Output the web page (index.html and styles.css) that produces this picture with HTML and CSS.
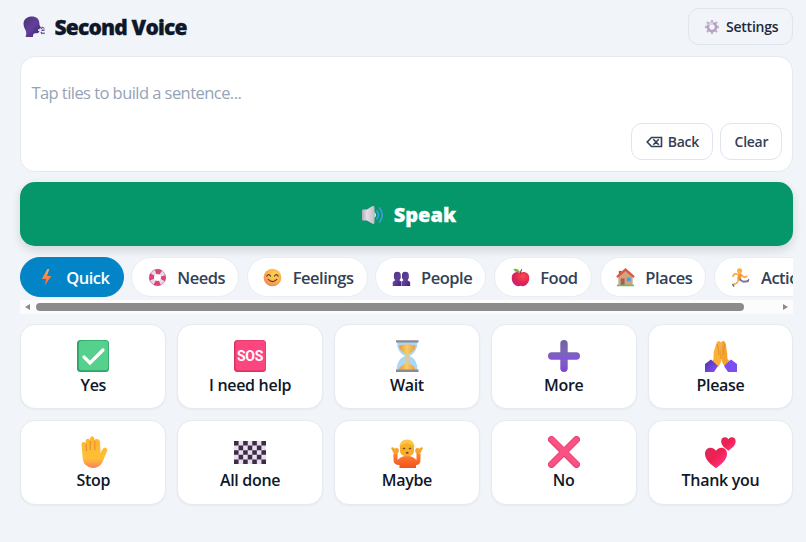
FILE: index.html
```html
<!DOCTYPE html>
<html lang="en">
<head>
  <meta charset="UTF-8">
  <meta name="viewport" content="width=device-width, initial-scale=1.0">
  <title>Second Voice</title>
  <link rel="stylesheet" href="styles.css">
</head>
<body>
  <svg width="0" height="0" class="defs">
    <defs>
      <linearGradient id="purple" x1="0" y1="0" x2="1" y2="1"><stop offset="0" stop-color="#493177"/><stop offset=".5" stop-color="#61409a"/><stop offset="1" stop-color="#3e2270"/></linearGradient>
      <linearGradient id="bolt" x1="0" y1="0" x2="0" y2="1"><stop offset="0" stop-color="#f9b052"/><stop offset="1" stop-color="#f15b45"/></linearGradient>
      <linearGradient id="cone" x1="0" y1="0" x2="1" y2="0"><stop offset="0" stop-color="#b5a9b9"/><stop offset=".4" stop-color="#e5dfe7"/><stop offset="1" stop-color="#c3bac7"/></linearGradient>
      <radialGradient id="face" cx=".6" cy=".35" r=".7"><stop offset="0" stop-color="#ffd44f"/><stop offset=".6" stop-color="#fbb04b"/><stop offset="1" stop-color="#ee7e57"/></radialGradient>
      <radialGradient id="apple" cx=".65" cy=".3" r=".8"><stop offset="0" stop-color="#fa4a53"/><stop offset=".6" stop-color="#de2450"/><stop offset="1" stop-color="#bc2487"/></radialGradient>
      <linearGradient id="plus" x1="0" y1="0" x2="0" y2="1"><stop offset="0" stop-color="#7060a2"/><stop offset=".5" stop-color="#8267c1"/><stop offset="1" stop-color="#7c48cb"/></linearGradient>
      <linearGradient id="plusBar" x1="0" y1="0" x2="0" y2="1"><stop offset="0" stop-color="#7668ae"/><stop offset="1" stop-color="#894fe0"/></linearGradient>
      <linearGradient id="hand" x1="0" y1="0" x2="0" y2="1"><stop offset="0" stop-color="#fdb52e"/><stop offset=".7" stop-color="#ffbf35"/><stop offset="1" stop-color="#f6825c"/></linearGradient>
      <linearGradient id="shirt" x1="0" y1="0" x2="0" y2="1"><stop offset="0" stop-color="#ff822d"/><stop offset="1" stop-color="#ef501f"/></linearGradient>
      <linearGradient id="heart" x1="0" y1="0" x2="1" y2="1"><stop offset="0" stop-color="#d9285d"/><stop offset=".45" stop-color="#f1204f"/><stop offset="1" stop-color="#fd3f9f"/></linearGradient>
      <linearGradient id="sand" x1="0" y1="0" x2="1" y2="0"><stop offset="0" stop-color="#e29a35"/><stop offset=".5" stop-color="#fbcb62"/><stop offset="1" stop-color="#dda04d"/></linearGradient>
      <linearGradient id="cuffL" x1="0" y1="0" x2="1" y2="1"><stop offset="0" stop-color="#4c31a8"/><stop offset="1" stop-color="#8b52ff"/></linearGradient>
      <path id="heartShape" d="M12 22C7 18 1 14 1 7.500C1 1 8.500-.5 12 4.500C15.500-.5 23 1 23 7.500C23 14 17 18 12 22z"/>
    </defs>
  </svg>

  <div class="app">
    <header class="header">
      <h1>
        <svg class="logo" viewBox="0 0 22 22"><path d="M8 .5C13 .2 16 2.500 16.300 6.500L16.500 9L18 11.800Q18 12.700 16.500 12.500L16.300 15.500Q16 17.500 12 17.300Q9.500 17.500 10 21H2.500Q4 17.500 2.500 14C-.8 9-.5 1.500 8 .5z" fill="url(#purple)"/><path d="M15 13.200h2.500v1.800H15z" fill="#e1ddf0"/><path d="M18 12.500l2-1.500M18.500 14.300h3M18 16l1.500 2M20.300 16.800l1.300.8M20.500 12.300l.8-.5" stroke="#65499a" stroke-width="1.500" fill="none"/></svg>
        <span>Second Voice</span>
      </h1>
      <button class="btn settings">
        <svg class="gear" viewBox="0 0 14 14"><g stroke="#bfb0cc" stroke-width="2.300"><path d="M7 0v14M0 7h14M2 2l10 10M12 2L2 12"/></g><circle cx="7" cy="7" r="4" fill="#f1f5f9" stroke="#b5a3c4" stroke-width="2.600"/><path d="M3.600 5A4 4 0 0 1 8 3.100" fill="none" stroke="#dcd3e4" stroke-width="2"/></svg>
        <span>Settings</span>
      </button>
    </header>

    <section class="sentence">
      <p class="placeholder">Tap tiles to build a sentence...</p>
      <div class="actions">
        <button class="btn back">
          <svg class="erase" viewBox="0 0 17 12"><path d="M5.500 1.500H15.500v9H5.500L1.200 6zM7.300 3.300l5.500 5.400M12.800 3.300l-5.500 5.400" fill="none" stroke="#334155" stroke-width="1.600"/></svg>
          <span>Back</span>
        </button>
        <button class="btn clear"><span>Clear</span></button>
      </div>
    </section>

    <button class="speak">
      <svg class="speaker" viewBox="0 0 23 20"><path d="M1 5.500Q1 4.500 2 4.500H6L11.500 1Q13.500.5 13.500 2.500V17.500Q13.500 19.500 11.500 18.800L6 15.500H2Q1 15.500 1 14.500z" fill="url(#cone)"/><path d="M13.500 7q3 3 0 6z" fill="#f1edf4"/><path d="M16 6q3 4 0 8M18.500 3q5.500 7 0 14" fill="none" stroke="#3b9dd5" stroke-width="1.700" stroke-linecap="round"/></svg>
      <span>Speak</span>
    </button>

    <nav class="categories">
      <div class="chips">
        <button class="chip quick active">
          <svg viewBox="0 0 20 20"><path d="M11 1L5 11.500h4.500L8 19l7-10.500h-4.500L13 1z" fill="url(#bolt)"/></svg><span>Quick</span>
        </button>
        <button class="chip needs">
          <svg viewBox="0 0 20 20"><circle cx="10" cy="10" r="6.200" fill="none" stroke="#e6d9ec" stroke-width="5"/><circle cx="10" cy="10" r="6.200" fill="none" stroke="#db4473" stroke-width="5" stroke-dasharray="5.700 4.040" stroke-dashoffset="2.850"/><circle cx="10" cy="10" r="8.600" fill="none" stroke="#c34c86" stroke-width=".6"/></svg><span>Needs</span>
        </button>
        <button class="chip feelings">
          <svg viewBox="0 0 20 20"><circle cx="10" cy="10" r="9.300" fill="url(#face)"/><path d="M4 8.500q2-3 4 0M12 8.500q2-3 4 0M5.500 12q4.500 4.500 9 0" fill="none" stroke="#613b32" stroke-width="1.200" stroke-linecap="round"/></svg><span>Feelings</span>
        </button>
        <button class="chip people">
          <svg viewBox="0 0 20 20"><g fill="url(#purple)"><path d="M2 7.500a3.600 3.600 0 0 1 7.200 0v3l-1.500 2.500 2 1.200V19H.8v-4.200L3.300 13 2 10.500z"/><path d="M10.500 7.500a3.600 3.600 0 0 1 7.200 0v3L16.400 13l2.700 1.800V19h-9v-4.800l2-1.200-1.600-2.500z"/></g></svg><span>People</span>
        </button>
        <button class="chip food">
          <svg viewBox="0 0 20 20"><path d="M10 5C14 3 19.200 5 19.200 10.500C19.200 16 15 20.500 10 18.800C5 20.500.8 16 .8 10.500C.8 5 6 3 10 5z" fill="url(#apple)"/><path d="M2.500 1Q8 0 9.500 4.500Q4 5 2.500 1z" fill="#6fba4a"/><path d="M10 6q0-3 1.500-4.500" stroke="#7b3c3c" stroke-width="1.200" fill="none"/></svg><span>Food</span>
        </button>
        <button class="chip places">
          <svg viewBox="0 0 20 20"><path d="M3 3h3v6H3z" fill="#a95848"/><path d="M2.500 8.500L10 2l7.500 6.500V18h-15z" fill="#d6a17c"/><path d="M1 9.500L10 1.700l9 7.800" fill="none" stroke="#d85b42" stroke-width="2.500"/><path d="M5 11h4v7H5z" fill="#9a6552"/><path d="M11.500 10h4v4h-4z" fill="#36a7e6"/><path d="M1 17.500h18v1.700H1z" fill="#65bd69"/></svg><span>Places</span>
        </button>
        <button class="chip actions-chip">
          <svg viewBox="0 0 20 20"><circle cx="9" cy="3" r="2.700" fill="#ffae43"/><g fill="none" stroke-linecap="round" stroke-linejoin="round"><path d="M8 7L4 6 2 8.500M11 7.500l3 2.300 2.500-1" stroke="#f8ad49" stroke-width="1.900"/><path d="M9.500 7.500L8.500 11" stroke="#f39836" stroke-width="4"/><path d="M9 12l4 2.500 4.500-.5" stroke="#8176a6" stroke-width="2"/><path d="M8 12.500L6 16l-4 1.500" stroke="#efb351" stroke-width="1.800"/><path d="M2 17.500l1 1.700M17.700 14l.8-1.700" stroke="#6d6394" stroke-width="1.500"/></g></svg><span>Actions</span>
        </button>
      </div>
      <div class="scrollbar">
        <i class="arrow left"></i>
        <div class="track"><div class="thumb"></div></div>
        <i class="arrow right"></i>
      </div>
    </nav>

    <main class="tiles">
      <button class="tile">
        <svg viewBox="0 0 32 32"><rect width="32" height="32" rx="3.500" fill="#2fa266"/><rect x="1.800" y=".8" width="29.500" height="29.500" rx="3" fill="#55d18d"/><path d="M7 17l6 6L26 10" fill="none" stroke="#fff" stroke-width="3.200" stroke-linecap="round"/></svg>
        <span>Yes</span>
      </button>
      <button class="tile">
        <svg viewBox="0 0 32 32"><rect width="32" height="32" rx="3.500" fill="#d7325f"/><rect x="1.500" y=".5" width="30" height="30" rx="3" fill="#fc467f"/><text x="16" y="20.800" class="sos" text-anchor="middle" textLength="26" lengthAdjust="spacingAndGlyphs">SOS</text></svg>
        <span>I need help</span>
      </button>
      <button class="tile">
        <svg viewBox="0 0 32 32"><path d="M6 2h20.500Q26.500 12 18.500 16Q26.500 19 26.500 30H5.500Q6 19 14 16Q6 12 6 2z" fill="#acd6f3"/><path d="M8 5.500Q16 3.500 24.500 5.500Q24.500 11 17.500 14v9.500Q23 25 24.500 29.500h-17Q10 25 15.300 23.500V14Q8 11 8 5.500z" fill="url(#sand)"/><path d="M5 .2h22.500v2.400H5zM5 29.600h22.500V32H5z" fill="#8d8991"/></svg>
        <span>Wait</span>
      </button>
      <button class="tile">
        <svg viewBox="0 0 32 32"><rect x="12.300" width="7.400" height="32" rx="3.700" fill="url(#plus)"/><rect y="12.300" width="32" height="7.400" rx="3.700" fill="url(#plusBar)"/></svg>
        <span>More</span>
      </button>
      <button class="tile">
        <svg viewBox="0 0 32 32"><path d="M15.500 2Q13-.5 11.500 3L8.700 12 8.500 19 6 23l7 4q3.500-4.500 3.300-8z" fill="#fcb034"/><path d="M16.500 2Q19-.5 20.500 3L22 12l.5 7 4 4-6 4Q16.500 23 16.300 18z" fill="#f6a22e"/><path d="M16 2v17M12 4q2 5 2 11M20 4q-2 5-2 11" fill="none" stroke="#d98630" stroke-width=".8"/><path d="M6 19.500L13 26l-4 6H0V24z" fill="url(#cuffL)"/><path d="M26 19.500l6 4.500v8h-9l-4-6z" fill="#7c4df0"/></svg>
        <span>Please</span>
      </button>
      <button class="tile">
        <svg viewBox="0 0 32 32"><path d="M4.500 8Q5.500 4.500 8.500 7V5Q10 1 13 4V2.500Q15-2 17.500 2.500V4Q21 1.500 23 5.500L23.500 17Q25.500 12 28 11.500Q31.500 12.500 30 15L25.500 26Q22.500 32 15.500 32Q7 31 5.800 23z" fill="url(#hand)"/><path d="M9 8l.5 7M13.300 5v9M17.800 5v9" stroke="#e08b32" stroke-width="1" fill="none"/></svg>
        <span>Stop</span>
      </button>
      <button class="tile">
        <svg viewBox="0 0 32 32"><rect y="5" width="32" height="23" fill="#eadff2"/><path d="M0 7.300h32M0 16.500h32M0 25.700h32" stroke="#3b2d43" stroke-width="4.600" stroke-dasharray="4.570"/><path d="M4.570 11.900H32M4.570 21.100H32" stroke="#3b2d43" stroke-width="4.600" stroke-dasharray="4.570"/></svg>
        <span>All done</span>
      </button>
      <button class="tile">
        <svg viewBox="0 0 32 32"><path d="M2.500 18h4v6Q11 19.500 16 20Q21 19.500 25.500 24v-6h4v6q0 5-4.500 5v3.500H8.500V29q-6 0-6-5z" fill="url(#shirt)"/><path d="M0 12Q2 10 4 13q1-2 3-.5Q9 14 6.500 18H3zM32 12q-2-2-4 1-1-2-3-.5-2 1.500.5 5.500H29z" fill="#f6a52c"/><path d="M9 11C9 1.500 23 1.500 23 11v4c0 7-14 7-14 0z" fill="#f9ae2b"/><path d="M8.500 11Q9 3.500 16 3.500T23.500 11q-3-3-7-3.500-5 0-8 3.500z" fill="#ffc640"/><path d="M12.500 12.500h1M18.500 12.500h1M15.500 17q.7-1.200 1.400 0" fill="none" stroke="#7c4628" stroke-width="1.500" stroke-linecap="round"/></svg>
        <span>Maybe</span>
      </button>
      <button class="tile">
        <svg viewBox="0 0 32 32"><path d="M3.500 3.500l25 25M28.500 3.500l-25 25" fill="none" stroke="#e53e70" stroke-width="7" stroke-linecap="round"/><path d="M3.800 3.200l24.800 25M28.500 3.500l-25 24.800" fill="none" stroke="#fa5282" stroke-width="5.300" stroke-linecap="round"/></svg>
        <span>No</span>
      </button>
      <button class="tile">
        <svg viewBox="0 0 32 32"><use href="#heartShape" transform="translate(-1 10.300) scale(1)" fill="url(#heart)"/><use href="#heartShape" transform="translate(15.500 .3) scale(.66)" fill="url(#heart)"/></svg>
        <span>Thank you</span>
      </button>
    </main>
  </div>
</body>
</html>
```
FILE: styles.css
```css
* {
  box-sizing: border-box;
}
body {
  margin: 0;
  height: 542px;
  overflow: hidden;
  background: #f1f5f9;
  color: #0f172a;
  font-family: "Open Sans", "Noto Sans", sans-serif;
}
button {
  font-family: inherit;
  color: inherit;
  padding: 0;
  cursor: pointer;
}
.defs {
  position: absolute;
}
.app {
  padding: 8px 12.6px 0 20.4px;
}
.header {
  display: flex;
  align-items: center;
  justify-content: space-between;
  height: 37px;
  margin-bottom: 10.5px;
}
h1 {
  display: flex;
  align-items: center;
  gap: 9px;
  margin: 0 0 0 3px;
  font-size: 21px;
  font-weight: 800;
  letter-spacing: -0.8px;
  -webkit-text-stroke: 0.3px #0f172a;
}
.logo {
  width: 22px;
  height: 22px;
}
.btn {
  display: flex;
  align-items: center;
  justify-content: center;
  height: 37px;
  border: 1px solid #dfe5ed;
  border-radius: 11px;
  background: #fff;
  color: #334155;
  font-size: 14px;
  font-weight: 600;
  letter-spacing: -0.25px;
}
.settings {
  width: 105.5px;
  gap: 7px;
  padding-left: 2px;
  background: #f1f5f9;
  color: #1e293b;
}
.gear {
  width: 14px;
  height: 14px;
}
.sentence {
  height: 116px;
  padding: 24px 10px 11px;
  background: #fff;
  border: 1px solid #e5eaf1;
  border-radius: 15px;
}
.placeholder {
  margin: 0;
  height: 42.5px;
  line-height: 24px;
  font-size: 16.5px;
  letter-spacing: -0.55px;
  color: #94a3b8;
}
.actions {
  display: flex;
  justify-content: flex-end;
  gap: 7px;
}
.back {
  width: 82px;
  gap: 5px;
}
.erase {
  width: 17px;
  height: 12px;
}
.clear {
  width: 62px;
}
.speak {
  display: flex;
  align-items: center;
  justify-content: center;
  gap: 10px;
  width: 100%;
  height: 64px;
  margin: 10.5px 0 11px;
  padding: 1px 0 0 3px;
  border: none;
  border-radius: 15px;
  background: #059669;
  box-shadow: 0 4px 10px rgba(15, 23, 42, 0.14);
  color: #fff;
  font-size: 20px;
  font-weight: 800;
  -webkit-text-stroke: 0.3px #fff;
}
.speaker {
  width: 23px;
  height: 20px;
}
.categories {
  overflow: hidden;
  height: 57px;
  margin-bottom: 10px;
}
.chips {
  display: flex;
  gap: 7.5px;
  height: 40px;
}
.chip {
  display: flex;
  flex: none;
  align-items: center;
  justify-content: center;
  gap: 10.5px;
  height: 40px;
  padding: 1px 0 0 2px;
  border: 1px solid #e9edf3;
  border-radius: 20px;
  background: #fff;
  color: #334155;
  font-size: 16.5px;
  font-weight: 600;
  letter-spacing: -0.5px;
}
.chip svg {
  width: 19px;
  height: 19px;
}
.chip span {
  line-height: 22px;
}
.chip.active {
  background: #0284c7;
  border-color: #0284c7;
  color: #fff;
}
.quick {
  width: 103.5px;
}
.needs {
  width: 108px;
}
.feelings {
  width: 121px;
}
.people {
  width: 111px;
}
.food {
  width: 98.5px;
}
.places {
  width: 106.5px;
}
.actions-chip {
  width: 118px;
}
.scrollbar {
  display: flex;
  align-items: center;
  height: 14px;
  margin-top: 3px;
  padding: 0 5px;
  background: #fcfcfc;
}
.track {
  flex: 1;
  padding: 0 39px 0 6px;
}
.thumb {
  height: 8px;
  border-radius: 4px;
  background: #8b8b8b;
}
.arrow {
  border: 3.5px solid transparent;
}
.arrow.left {
  border-left: none;
  border-right: 5px solid #8b8b8b;
}
.arrow.right {
  border-right: none;
  border-left: 5px solid #8b8b8b;
}
.tiles {
  display: grid;
  grid-template-columns: repeat(5, 1fr);
  gap: 11px;
}
.tile {
  display: flex;
  flex-direction: column;
  align-items: center;
  height: 85px;
  padding-top: 15px;
  border: 1px solid #e6ebf1;
  border-radius: 15px;
  background: #fff;
  box-shadow: 0 1px 2px rgba(15, 23, 42, 0.05);
  color: #0f172a;
  font-size: 16px;
  font-weight: 600;
  letter-spacing: -0.3px;
}
.tile svg {
  flex: none;
  width: 32px;
  height: 32px;
}
.tile > span {
  margin-top: 2px;
  line-height: 22px;
}
.tile:nth-child(n+6) > span {
  margin-top: 1px;
}
.sos {
  fill: #fff;
  font: 700 14px "Roboto", sans-serif;
}
```
